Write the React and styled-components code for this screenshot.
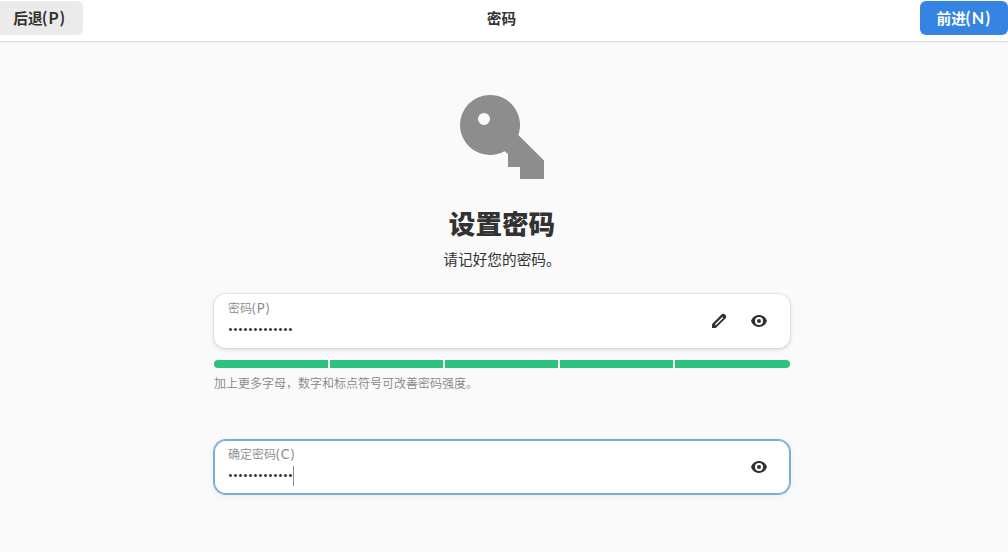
import styled, { createGlobalStyle, css } from "styled-components";

const GlobalStyles = createGlobalStyle`
  * {
    box-sizing: border-box;
  }
  body {
    margin: 0;
    background: #fafafa;
    color: #323232;
    font-family: "Noto Sans CJK SC", sans-serif;
    font-size: 14.67px;
  }
`;

const Page = styled.div`
  height: 552px;
  overflow: hidden;
`;

const HeaderBar = styled.header`
  display: flex;
  align-items: flex-start;
  height: 41px;
  padding-top: 1px;
  background: #ffffff;
  box-shadow: 0 1px 0 #dfdfdf, 0 2px 2px rgba(0, 0, 0, 0.05);
`;

const HeaderTitle = styled.h1`
  flex: 1;
  margin: 0;
  font-size: 14.67px;
  font-weight: 700;
  line-height: 34px;
  text-align: center;
`;

const HeaderButton = styled.button`
  height: 34px;
  padding: 0;
  border: none;
  font-family: "Noto Sans CJK SC", sans-serif;
  font-size: 14.67px;
  font-weight: 700;
  line-height: 34px;
  ${({ $suggested }) =>
    $suggested
      ? css`
          width: 88px;
          background: #3584e4;
          color: #ffffff;
          border-radius: 6px;
        `
      : css`
          width: 83px;
          padding-right: 4px;
          background: #ebebeb;
          color: #323232;
          border-radius: 0 6px 6px 0;
        `}
`;

const Mnemonic = styled.span`
  font-family: Lato, sans-serif;
  font-size: 1.1em;
  line-height: 1;
  letter-spacing: 0.09em;
`;

const Content = styled.main`
  display: flex;
  flex-direction: column;
  align-items: center;
  width: 1004px;
  padding-top: 48px;
`;

const KeyIcon = styled.svg`
  display: block;
  width: 96px;
  height: 96px;
  fill: #8d8d8d;
`;

const Title = styled.h2`
  margin: 18px 0 0;
  font-size: 26.6px;
  font-weight: 800;
  line-height: 40px;
`;

const Description = styled.p`
  margin: 6px 0 0;
  line-height: 20px;
`;

const Form = styled.div`
  width: 576px;
  margin-top: 25px;
`;

const EntryRow = styled.div`
  display: flex;
  align-items: center;
  height: 54px;
  padding: 0 14px;
  background: #ffffff;
  border-radius: 12px;
  box-shadow: ${({ $focused }) =>
    $focused
      ? "inset 0 0 0 1px #78aadc, 0 0 0 1px #78aadc, 0 2px 6px 2px rgba(0, 0, 0, 0.04)"
      : "0 0 0 1px rgba(0, 0, 0, 0.04), 0 1px 3px 1px rgba(0, 0, 0, 0.08), 0 2px 6px 2px rgba(0, 0, 0, 0.03)"};
`;

const EntryText = styled.div`
  flex: 1;
`;

const EntryLabel = styled.div`
  height: 18px;
  color: #8a8a8a;
  font-size: 12px;
  font-weight: 350;
  line-height: 12px;

  ${Mnemonic} {
    font-weight: 400;
  }
`;

const EntryValue = styled.div`
  display: flex;
  align-items: center;
  height: 20px;
`;

const Bullets = styled.span`
  padding: 0 0 2px 0.5px;
  font-family: "Liberation Sans", sans-serif;
  font-size: 11px;
  line-height: 18px;
  letter-spacing: 1.15px;
`;

const Caret = styled.span`
  width: 1px;
  height: 20px;
  margin-left: -1px;
  background: #8a8a8a;
`;

const Actions = styled.div`
  display: flex;
  gap: 24px;
  padding-right: 9px;
`;

const ActionIcon = styled.svg`
  display: block;
  width: 16px;
  height: 16px;
  fill: #323232;
`;

const StrengthBar = styled.div`
  display: grid;
  grid-template-columns: 114px 113px 113px 113px 115px;
  gap: 2px;
  height: 8px;
  margin-top: 12px;
  border-radius: 4px;
  overflow: hidden;
`;

const Segment = styled.div`
  background: #2ec27e;
`;

const Hint = styled.p`
  margin: 6px 0 48px;
  color: #858585;
  font-size: 12px;
  font-weight: 350;
  line-height: 18px;
`;

const Pencil = () => (
  <ActionIcon viewBox="0 0 16 16">
    <path
      fillRule="evenodd"
      d="M10.200 1.700a2.800 2.800 0 0 1 4 0 2.800 2.800 0 0 1 0 4L5.300 14.400 4.500 15H1v-3.500l.6-.9zM11.300 3.900 3.900 11.200l1 1 7.400-7.300z"
    />
  </ActionIcon>
);

const Eye = () => (
  <ActionIcon viewBox="0 0 16 16">
    <path
      fillRule="evenodd"
      d="M8 2C4.600 2 1.200 4.200 0 8c1.200 3.800 4.600 6 8 6s6.800-2.200 8-6c-1.200-3.800-4.600-6-8-6zM8 4a4 4 0 1 1 0 8 4 4 0 0 1 0-8z"
    />
    <circle cx="8" cy="8" r="2" />
  </ActionIcon>
);

const PasswordEntry = ({ label, mnemonic, focused, editable }) => (
  <EntryRow $focused={focused}>
    <EntryText>
      <EntryLabel>
        {label}
        <Mnemonic>({mnemonic})</Mnemonic>
      </EntryLabel>
      <EntryValue>
        <Bullets>{"•".repeat(13)}</Bullets>
        {focused && <Caret />}
      </EntryValue>
    </EntryText>
    <Actions>
      {editable && <Pencil />}
      <Eye />
    </Actions>
  </EntryRow>
);

const App = () => {
  return (
    <Page>
      <GlobalStyles />
      <HeaderBar>
        <HeaderButton>
          后退<Mnemonic>(P)</Mnemonic>
        </HeaderButton>
        <HeaderTitle>密码</HeaderTitle>
        <HeaderButton $suggested>
          前进<Mnemonic>(N)</Mnemonic>
        </HeaderButton>
      </HeaderBar>
      <Content>
        <KeyIcon viewBox="0 0 96 96">
          <path
            fillRule="evenodd"
            d="M36 6a30 30 0 0 1 28.300 40L90 71.500V90H66V78H54V65l-3.500-2.800A30 30 0 0 1 6 36 30 30 0 0 1 36 6zM30 24a6 6 0 1 0 0 12 6 6 0 0 0 0-12z"
          />
        </KeyIcon>
        <Title>设置密码</Title>
        <Description>请记好您的密码。</Description>
        <Form>
          <PasswordEntry label="密码" mnemonic="P" editable />
          <StrengthBar>
            <Segment />
            <Segment />
            <Segment />
            <Segment />
            <Segment />
          </StrengthBar>
          <Hint>加上更多字母，数字和标点符号可改善密码强度。</Hint>
          <PasswordEntry label="确定密码" mnemonic="C" focused />
        </Form>
      </Content>
    </Page>
  );
};

export default App;
